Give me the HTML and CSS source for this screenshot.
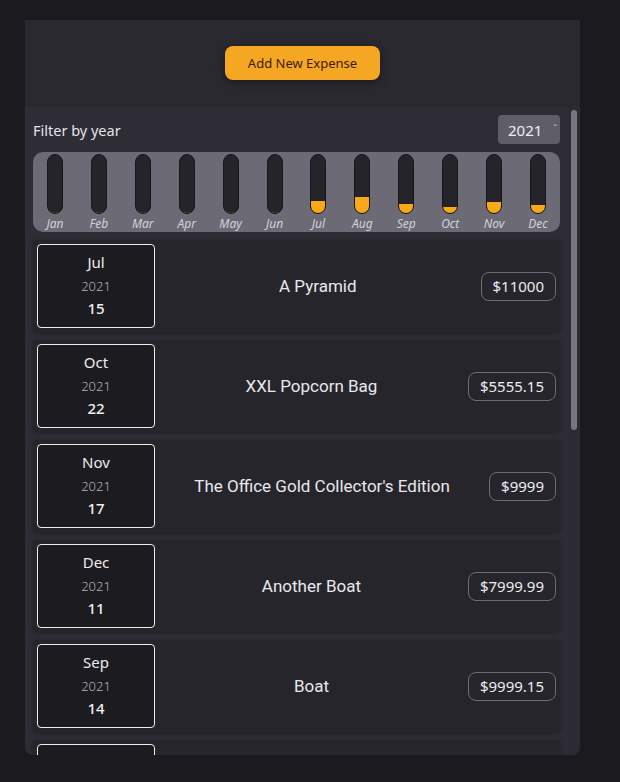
FILE: index.html
```html
<!DOCTYPE html>
<html>
<head>
<meta charset="utf-8">
<link rel="stylesheet" href="styles.css">
</head>
<body>
<main class="app">
  <section class="new-expense">
    <button class="add-btn">Add New Expense</button>
  </section>
  <section class="expenses">
    <div class="content">
      <div class="filter">
        <label class="filter-label">Filter by year</label>
        <div class="select">2021<span class="chev">&#x2C7;</span></div>
      </div>
      <div class="chart">
        <div class="col"><div class="bar"><div class="fill" style="height:0%"></div></div><span class="mlabel">Jan</span></div>
        <div class="col"><div class="bar"><div class="fill" style="height:0%"></div></div><span class="mlabel">Feb</span></div>
        <div class="col"><div class="bar"><div class="fill" style="height:0%"></div></div><span class="mlabel">Mar</span></div>
        <div class="col"><div class="bar"><div class="fill" style="height:0%"></div></div><span class="mlabel">Apr</span></div>
        <div class="col"><div class="bar"><div class="fill" style="height:0%"></div></div><span class="mlabel">May</span></div>
        <div class="col"><div class="bar"><div class="fill" style="height:0%"></div></div><span class="mlabel">Jun</span></div>
        <div class="col"><div class="bar"><div class="fill" style="height:22%"></div></div><span class="mlabel">Jul</span></div>
        <div class="col"><div class="bar"><div class="fill" style="height:29%"></div></div><span class="mlabel">Aug</span></div>
        <div class="col"><div class="bar"><div class="fill" style="height:17%"></div></div><span class="mlabel">Sep</span></div>
        <div class="col"><div class="bar"><div class="fill" style="height:12%"></div></div><span class="mlabel">Oct</span></div>
        <div class="col"><div class="bar"><div class="fill" style="height:20%"></div></div><span class="mlabel">Nov</span></div>
        <div class="col"><div class="bar"><div class="fill" style="height:15%"></div></div><span class="mlabel">Dec</span></div>
      </div>
      <ul class="list">
        <li class="item">
          <div class="date"><span class="month">Jul</span><span class="year">2021</span><span class="day">15</span></div>
          <h2 class="title">A Pyramid</h2>
          <div class="price">$11000</div>
        </li>
        <li class="item">
          <div class="date"><span class="month">Oct</span><span class="year">2021</span><span class="day">22</span></div>
          <h2 class="title">XXL Popcorn Bag</h2>
          <div class="price">$5555.15</div>
        </li>
        <li class="item">
          <div class="date"><span class="month">Nov</span><span class="year">2021</span><span class="day">17</span></div>
          <h2 class="title">The Office Gold Collector's Edition</h2>
          <div class="price">$9999</div>
        </li>
        <li class="item">
          <div class="date"><span class="month">Dec</span><span class="year">2021</span><span class="day">11</span></div>
          <h2 class="title">Another Boat</h2>
          <div class="price">$7999.99</div>
        </li>
        <li class="item">
          <div class="date"><span class="month">Sep</span><span class="year">2021</span><span class="day">14</span></div>
          <h2 class="title">Boat</h2>
          <div class="price">$9999.15</div>
        </li>
        <li class="item item-partial">
          <div class="date"></div>
        </li>
      </ul>
    </div>
    <div class="scrollbar"><div class="thumb"></div></div>
  </section>
</main>
</body>
</html>
```

FILE: styles.css
```css
* { box-sizing: border-box; }
html, body { margin: 0; padding: 0; }
body {
  background: #1b1a1f;
  font-family: "Noto Sans", "Open Sans", sans-serif;
  color: #e6e6ea;
}
.app {
  margin: 20px 0 0 25px;
  width: 555px;
  height: 735px;
  background: #2a2930;
  border-radius: 0 0 8px 8px;
  display: flex;
  flex-direction: column;
  overflow: hidden;
}
.new-expense {
  height: 87px;
  flex: none;
  display: flex;
  justify-content: center;
  align-items: flex-start;
  padding-top: 26px;
}
.add-btn {
  width: 155px;
  height: 34px;
  border: none;
  border-radius: 8px;
  background: #f5a623;
  color: #3b1c04;
  font-family: "Noto Sans", sans-serif;
  font-size: 13px;
  padding: 0;
  box-shadow: 0 2px 8px rgba(0,0,0,0.45);
}
.expenses {
  flex: 1;
  min-height: 0;
  background: #2e2d35;
  display: flex;
}
.content {
  flex: 1;
  min-width: 0;
  overflow: hidden;
  padding: 8px 8px 0 8px;
}
.scrollbar {
  width: 12px;
  flex: none;
  padding: 3px 3px 0 3px;
  background: #2c2b33;
}
.thumb {
  width: 6px;
  height: 320px;
  background: #77767e;
  border-radius: 3px;
}
.filter {
  display: flex;
  justify-content: space-between;
  align-items: center;
  height: 29px;
  margin-bottom: 8px;
}
.filter-label {
  font-size: 14.5px;
  color: #e4e4e8;
}
.select {
  width: 62px;
  height: 29px;
  background: #5f5e68;
  border-radius: 4px;
  font-size: 15px;
  color: #eeeef2;
  display: flex;
  align-items: center;
  padding-left: 10px;
  position: relative;
}
.chev {
  position: absolute;
  right: 3px;
  top: 7px;
  font-size: 9px;
  color: #d8d8de;
}
.chart {
  height: 80px;
  background: #6b6a75;
  border-radius: 10px;
  display: grid;
  grid-template-columns: repeat(12, 1fr);
  padding-top: 2px;
  margin-bottom: 8px;
}
.col {
  display: flex;
  flex-direction: column;
  align-items: center;
}
.bar {
  width: 16px;
  height: 60px;
  background: #25242b;
  border: 1px solid #17161b;
  border-radius: 8px;
  overflow: hidden;
  display: flex;
  flex-direction: column;
  justify-content: flex-end;
}
.fill {
  background: #f8a81b;
  border-top: 1px solid #2a1f10;
}
.mlabel {
  font-size: 12px;
  font-style: italic;
  color: #d2d1d8;
  line-height: 18px;
  margin-top: 1px;
}
.list {
  list-style: none;
  margin: 0;
  padding: 0;
}
.item {
  height: 92px;
  margin-bottom: 8px;
  background: #26252c;
  border-radius: 4px;
  box-shadow: 0 1px 4px rgba(0,0,0,0.35);
  padding: 4px;
  display: flex;
  align-items: center;
}
.date {
  width: 118px;
  height: 84px;
  flex: none;
  background: #1c1b20;
  border: 1px solid #ececec;
  border-radius: 4px;
  display: flex;
  flex-direction: column;
  align-items: center;
  justify-content: center;
  padding-bottom: 2px;
}
.month {
  font-size: 15px;
  color: #ececee;
  line-height: 22px;
  margin-bottom: 2px;
}
.year {
  font-size: 13px;
  font-weight: 300;
  color: #b3b2b8;
  line-height: 22px;
}
.day {
  font-size: 15px;
  font-weight: 500;
  color: #f0f0f2;
  line-height: 22px;
}
.title {
  flex: 1;
  margin: 0;
  text-align: center;
  font-family: Roboto, "Noto Sans", sans-serif;
  font-weight: 400;
  font-size: 17px;
  color: #e8e8ec;
}
.price {
  height: 29px;
  flex: none;
  border: 1px solid #6e6d76;
  border-radius: 8px;
  padding: 0 11px;
  font-size: 15px;
  color: #ececf0;
  display: flex;
  align-items: center;
  background: #26252c;
}
```
